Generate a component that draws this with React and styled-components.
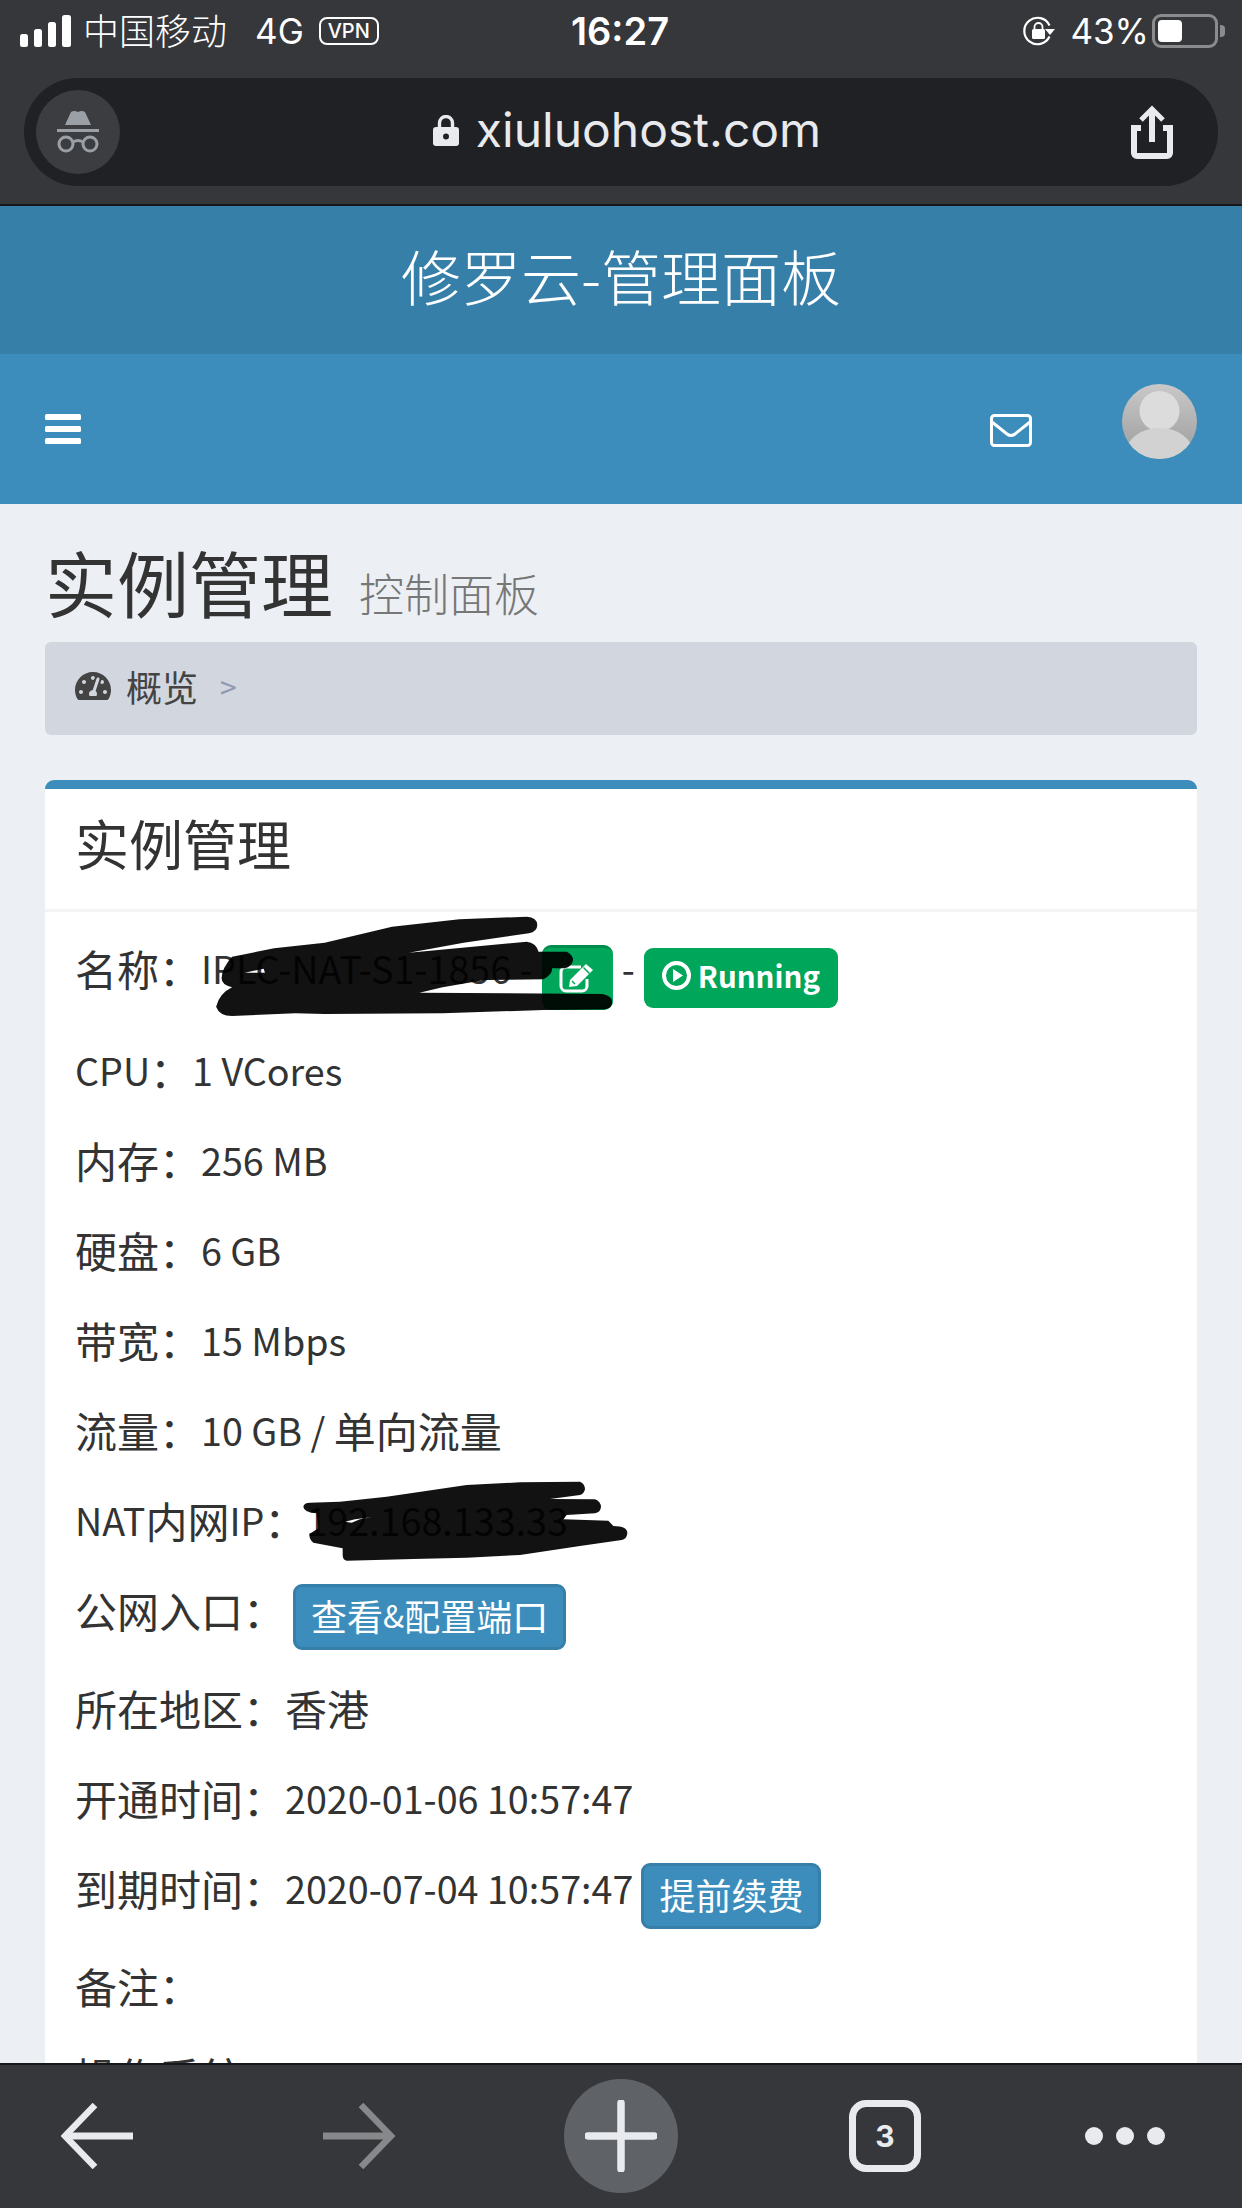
import React from "react";
import styled, { createGlobalStyle } from "styled-components";
import { FaTachometerAlt } from "react-icons/fa";

const CJK = '"Noto Sans CJK SC", "Noto Sans", sans-serif';

const Global = createGlobalStyle`
  html, body { margin: 0; padding: 0; background: #ecf0f5; }
  * { box-sizing: border-box; }
`;

const Page = styled.div`
  width: 1242px;
  height: 2208px;
  display: flex;
  flex-direction: column;
  overflow: hidden;
  font-family: ${CJK};
  color: #333;
`;

const Toolbar = styled.header`
  height: 206px;
  flex: none;
  background: #36373b;
  border-bottom: 2px solid #17181a;
  padding: 0 24px;
  color: #fff;
`;

const StatusBar = styled.div`
  height: 78px;
  margin: 0 -24px;
  padding: 0 24px 16px 20px;
  display: grid;
  grid-template-columns: 1fr auto 1fr;
  align-items: center;
`;

const StatusLeft = styled.div`
  display: flex;
  align-items: center;
`;

const StatusRight = styled.div`
  display: flex;
  align-items: center;
  justify-content: flex-end;
`;

const Carrier = styled.span`
  font-size: 36px;
  line-height: 40px;
  font-weight: 300;
  margin: 0 0 4px 12px;
`;

const StatusText = styled.span`
  font-family: Inter, sans-serif;
  font-size: 35px;
  line-height: 40px;
  font-weight: 400;
  margin-left: ${p => p.$gap || 0}px;
`;

const Clock = styled.span`
  font-family: Inter, sans-serif;
  font-size: 38px;
  line-height: 40px;
  font-weight: 600;
  margin-left: 2px;
`;

const VpnTag = styled.span`
  width: 60px;
  height: 28px;
  margin-left: 15px;
  border: 2px solid #fff;
  border-radius: 8px;
  font-family: Inter, sans-serif;
  font-size: 20px;
  font-weight: 500;
  display: flex;
  align-items: center;
  justify-content: center;
`;

const Battery = styled.span`
  width: 66px;
  height: 34px;
  margin-left: 3px;
  border: 3px solid #8a8b8d;
  border-radius: 9px;
  padding: 3px;
  display: block;
  position: relative;
  &::after {
    content: "";
    position: absolute;
    right: -10px;
    top: 8px;
    width: 5px;
    height: 12px;
    background: #8a8b8d;
    border-radius: 0 4px 4px 0;
  }
`;

const BatteryFill = styled.span`
  display: block;
  width: 24px;
  height: 22px;
  background: #fff;
  border-radius: 4px;
`;

const UrlBar = styled.div`
  height: 108px;
  border-radius: 54px;
  background: #202124;
  padding: 0 45px 0 12px;
  display: flex;
  align-items: center;
  justify-content: space-between;
`;

const Incognito = styled.span`
  width: 84px;
  height: 84px;
  border-radius: 50%;
  background: #3c3d41;
  display: block;
`;

const Address = styled.div`
  display: flex;
  align-items: center;
  gap: 17px;
  margin: 0 0 4px 3px;
`;

const UrlText = styled.span`
  font-family: Inter, sans-serif;
  font-size: 48px;
  line-height: 56px;
  font-weight: 400;
  color: #e8eaed;
`;

const Logo = styled.div`
  height: 148px;
  flex: none;
  padding-bottom: 12px;
  background: #367fa9;
  color: #fff;
  font-size: 60px;
  font-weight: 300;
  display: flex;
  align-items: center;
  justify-content: center;
`;

const Navbar = styled.nav`
  height: 150px;
  flex: none;
  background: #3c8dbc;
  padding: 30px 45px 0;
  display: flex;
  align-items: flex-start;
`;

const Hamburger = styled.svg`
  margin-top: 30px;
  display: block;
`;

const MailIcon = styled.svg`
  margin: 30px 90px 0 auto;
  display: block;
`;

const Avatar = styled.svg`
  display: block;
`;

const Content = styled.main`
  flex: 1;
  min-height: 0;
  overflow: hidden;
  padding: 38px 45px 0;
`;

const Heading = styled.div`
  display: flex;
  align-items: baseline;
  gap: 26px;
  height: 85px;
`;

const Title = styled.h1`
  margin: 0;
  font-size: 72px;
  line-height: 78px;
  font-weight: 400;
`;

const Subtitle = styled.small`
  font-size: 45px;
  font-weight: 300;
  color: #777;
`;

const Breadcrumb = styled.div`
  height: 93px;
  margin-top: 15px;
  background: #d2d6de;
  border-radius: 6px;
  padding: 0 30px 6px;
  display: flex;
  align-items: center;
  color: #444;
  font-size: 36px;
`;

const CrumbText = styled.span`
  margin-left: 15px;
  line-height: 60px;
`;

const CrumbSep = styled.span`
  margin-left: 22px;
  color: #8f99b0;
  font-size: 30px;
`;

const Box = styled.section`
  margin-top: 45px;
  background: #fff;
  border-top: 9px solid #3c8dbc;
  border-radius: 9px 9px 0 0;
`;

const BoxHeader = styled.div`
  height: 123px;
  padding: 0 30px 13px;
  border-bottom: 3px solid #f4f4f4;
  font-size: 54px;
  display: flex;
  align-items: center;
`;

const BoxBody = styled.div`
  padding: 28px 30px 0;
`;

const Row = styled.div`
  position: relative;
  display: flex;
  align-items: flex-start;
  height: ${p => p.$h || 60}px;
  margin-bottom: 30px;
  font-size: 42px;
  line-height: 56px;
  white-space: pre;
`;

const Latin = styled.span`
  font-size: 37.7px;
`;

const Button = styled.span`
  height: 66px;
  margin-top: ${p => p.$top}px;
  margin-left: ${p => p.$left}px;
  padding: 0 15px 4px;
  border: 3px solid #367fa9;
  border-radius: 9px;
  background: #3c8dbc;
  color: #fff;
  font-size: 36px;
  display: flex;
  align-items: center;
`;

const ButtonLatin = styled.span`
  font-size: 31px;
`;

const EditButton = styled.span`
  width: 71px;
  height: 65px;
  margin: 5px 9px 0 9px;
  background: #00a65a;
  border: 3px solid #008d4c;
  border-width: 3px 0;
  border-radius: 9px;
  display: flex;
  align-items: center;
  justify-content: center;
`;

const StatusLabel = styled.span`
  height: 60px;
  margin: 8px 0 0 9px;
  padding: 0 18px 6px 18px;
  background: #00a65a;
  border-radius: 9px;
  color: #fff;
  font-size: 29.5px;
  font-weight: 700;
  display: flex;
  align-items: center;
  gap: 7px;
`;

const Scribble = styled.svg`
  position: absolute;
  left: ${p => p.$x}px;
  top: ${p => p.$y}px;
  pointer-events: none;
`;

const BottomBar = styled.footer`
  height: 145px;
  flex: none;
  background: #36373b;
  border-top: 2px solid #17181a;
  padding: 14px 0 0 61px;
  display: grid;
  grid-template-columns: 262px 241px 285px 236px auto;
  align-items: center;
  justify-items: start;
  align-content: start;
`;

const NewTab = styled.span`
  width: 114px;
  height: 114px;
  border-radius: 50%;
  background: #5f6368;
  display: flex;
  align-items: center;
  justify-content: center;
`;

const TabCount = styled.span`
  width: 72px;
  height: 72px;
  border: 7px solid #e8eaed;
  border-radius: 17px;
  color: #e8eaed;
  font-family: Inter, sans-serif;
  font-size: 30px;
  font-weight: 700;
  display: flex;
  align-items: center;
  justify-content: center;
`;

const Signal = () => (
  <svg width="51" height="32" viewBox="0 0 51 32">
    <rect x="0" y="19" width="8" height="13" rx="2.5" fill="#fff" />
    <rect x="14" y="14" width="8" height="18" rx="2.5" fill="#fff" />
    <rect x="28" y="7" width="8" height="25" rx="2.5" fill="#fff" />
    <rect x="42" y="0" width="9" height="32" rx="2.5" fill="#fff" />
  </svg>
);

const RotationLock = () => (
  <svg width="34" height="30" viewBox="0 0 34 30">
    <path d="M27.5 9.5A13.2 13.2 0 1 0 27.5 20.5" fill="none" stroke="#fff" strokeWidth="2.2" />
    <path d="M23 13h10l-5 6z" fill="#fff" />
    <rect x="10" y="13" width="13" height="10" rx="1.5" fill="#fff" />
    <path d="M12.5 13.5v-2.5a4 4 0 0 1 8 0v2.5" fill="none" stroke="#fff" strokeWidth="1.8" />
  </svg>
);

const IncognitoIcon = () => (
  <Incognito>
    <svg width="84" height="84" viewBox="0 0 84 84">
      <path d="M29 35L35 22Q38 20 42 22Q46 20 49 22L55 35z" fill="#9aa0a6" />
      <rect x="21" y="39" width="42" height="3" fill="#9aa0a6" />
      <circle cx="30" cy="54" r="7" fill="none" stroke="#9aa0a6" strokeWidth="3" />
      <circle cx="54" cy="54" r="7" fill="none" stroke="#9aa0a6" strokeWidth="3" />
      <path d="M37 52Q42 49 47 52" fill="none" stroke="#9aa0a6" strokeWidth="3" />
    </svg>
  </Incognito>
);

const LockIcon = () => (
  <svg width="26" height="31" viewBox="0 0 26 31">
    <path d="M6.5 13V8a6.5 6.5 0 0 1 13 0v5" fill="none" stroke="#e8eaed" strokeWidth="3.4" />
    <rect x="0" y="12" width="26" height="19" rx="3" fill="#e8eaed" />
    <circle cx="13" cy="21.5" r="3" fill="#202124" />
  </svg>
);

const ShareIcon = () => (
  <svg width="42" height="54" viewBox="0 0 42 54">
    <path d="M21 4V37" stroke="#e8eaed" strokeWidth="6" fill="none" />
    <path d="M10 15L21 4L32 15" stroke="#e8eaed" strokeWidth="5" fill="none" />
    <path d="M10 23H3V48a3 3 0 0 0 3 3H36a3 3 0 0 0 3-3V23H32" stroke="#e8eaed" strokeWidth="6" fill="none" />
  </svg>
);

const EditIcon = () => (
  <svg width="36" height="30" viewBox="0 0 36 30">
    <path d="M22 4H7a5 5 0 0 0-5 5V23a5 5 0 0 0 5 5H23a5 5 0 0 0 5-5V16" fill="none" stroke="#fff" strokeWidth="3" />
    <path d="M27 1L34 7L18 23L10 24L11 17Z" fill="#fff" />
    <path d="M24.5 4.5L30.5 10.5" stroke="#00a65a" strokeWidth="1.5" />
    <path d="M13 18L16 21" stroke="#00a65a" strokeWidth="1.5" />
  </svg>
);

const PlayIcon = () => (
  <svg width="29" height="29" viewBox="0 0 29 29">
    <circle cx="14.5" cy="14.5" r="12.5" fill="none" stroke="#fff" strokeWidth="4" />
    <path d="M11 8L21 14.5L11 21Z" fill="#fff" />
  </svg>
);

const Arrow = ({ color, flip }) => (
  <svg width="72" height="66" viewBox="0 0 72 66" style={flip ? { transform: "scaleX(-1)" } : undefined}>
    <path d="M72 33H4" stroke={color} strokeWidth="7" fill="none" />
    <path d="M34 2L4 33L34 64" stroke={color} strokeWidth="6.5" fill="none" />
  </svg>
);

const Plus = () => (
  <svg width="72" height="72" viewBox="0 0 72 72">
    <path d="M36 3V69M3 36H69" stroke="#e8eaed" strokeWidth="7.5" strokeLinecap="round" fill="none" />
  </svg>
);

const Dots = () => (
  <svg width="80" height="18" viewBox="0 0 80 18">
    <circle cx="9" cy="9" r="9" fill="#e8eaed" />
    <circle cx="40" cy="9" r="9" fill="#e8eaed" />
    <circle cx="71" cy="9" r="9" fill="#e8eaed" />
  </svg>
);

const name = "M100 170L200 145L320 128L480 80L640 58L800 50Q825 52 825 75Q825 95 805 100L650 128L520 158L800 125Q822 128 828 155L895 155Q910 165 910 180Q908 200 890 205L860 205Q862 222 840 238L700 240L600 262L545 278L980 282Q1003 288 1003 305Q1003 325 985 328L840 330L600 340L320 342L250 340L100 348Q70 348 62 320Q70 280 100 262Q75 255 75 235Q75 205 100 170ZM130 218L175 206L178 218Z";
const ip = "M70 140Q72 128 90 128L180 125L320 110L560 75L720 67L900 65Q915 72 915 88Q912 102 900 105L810 117L945 118Q963 125 963 142Q960 158 945 160L860 165L850 178L985 182L1000 198Q1042 198 1042 220Q1040 238 1025 240L900 258L720 285L560 293L400 297L200 302Q188 300 188 285L188 265L100 248Q88 240 88 222L115 205L110 160Q72 158 70 140ZM195 185L225 178L275 172L240 178L215 188Z";

export default function App() {
  return (
    <Page lang="zh-CN">
      <Global />
      <Toolbar>
        <StatusBar>
          <StatusLeft>
            <Signal />
            <Carrier>中国移动</Carrier>
            <StatusText $gap={28}>4G</StatusText>
            <VpnTag>VPN</VpnTag>
          </StatusLeft>
          <Clock>16:27</Clock>
          <StatusRight>
            <RotationLock />
            <StatusText $gap={14}>43%</StatusText>
            <Battery><BatteryFill /></Battery>
          </StatusRight>
        </StatusBar>
        <UrlBar>
          <IncognitoIcon />
          <Address>
            <LockIcon />
            <UrlText>xiuluohost.com</UrlText>
          </Address>
          <ShareIcon />
        </UrlBar>
      </Toolbar>

      <Logo>修罗云-管理面板</Logo>

      <Navbar>
        <Hamburger width="36" height="30" viewBox="0 0 36 30">
          <rect y="0" width="36" height="6" rx="1.5" fill="#fff" />
          <rect y="12" width="36" height="6" rx="1.5" fill="#fff" />
          <rect y="24" width="36" height="6" rx="1.5" fill="#fff" />
        </Hamburger>
        <MailIcon width="42" height="33" viewBox="0 0 42 33">
          <rect x="1.5" y="1.5" width="39" height="30" rx="3" fill="none" stroke="#fff" strokeWidth="3" />
          <path d="M2 8L17 20Q21 23 25 20L40 8" fill="none" stroke="#fff" strokeWidth="3" />
        </MailIcon>
        <Avatar width="75" height="75" viewBox="0 0 75 75">
          <defs>
            <linearGradient id="avatarBg" x1="0" y1="0" x2="0" y2="1">
              <stop offset="0" stopColor="#c9c9c9" />
              <stop offset="0.7" stopColor="#a9a9a9" />
            </linearGradient>
            <clipPath id="avatarClip"><circle cx="37.5" cy="37.5" r="37.5" /></clipPath>
          </defs>
          <circle cx="37.5" cy="37.5" r="37.5" fill="url(#avatarBg)" />
          <g clipPath="url(#avatarClip)">
            <circle cx="37.5" cy="27" r="20" fill="#dcdcdc" />
            <ellipse cx="37.5" cy="68" rx="33" ry="24" fill="#d2d2d2" />
          </g>
        </Avatar>
      </Navbar>

      <Content>
        <Heading>
          <Title>实例管理</Title>
          <Subtitle>控制面板</Subtitle>
        </Heading>
        <Breadcrumb>
          <FaTachometerAlt size={36} color="#444" />
          <CrumbText>概览</CrumbText>
          <CrumbSep>&gt;</CrumbSep>
        </Breadcrumb>
        <Box>
          <BoxHeader>实例管理</BoxHeader>
          <BoxBody>
            <Row $h={72}>
              名称：<Latin>IPLC-NAT-S1-1856 -</Latin>
              <EditButton><EditIcon /></EditButton>
              <Latin>-</Latin>
              <StatusLabel><PlayIcon />Running</StatusLabel>
              <Scribble $x={115} $y={-40} width="660" height="140" viewBox="0 0 1568 420" preserveAspectRatio="none">
                <path d={name} fill="#000" fillOpacity="0.93" fillRule="evenodd" />
              </Scribble>
            </Row>
            <Row><Latin>CPU</Latin>：<Latin>1 VCores</Latin></Row>
            <Row>内存：<Latin>256 MB</Latin></Row>
            <Row>硬盘：<Latin>6 GB</Latin></Row>
            <Row>带宽：<Latin>15 Mbps</Latin></Row>
            <Row>流量：<Latin>10 GB / </Latin>单向流量</Row>
            <Row>
              <Latin>NAT</Latin>内网<Latin>IP</Latin>：<Latin>192.168.133.33</Latin>
              <Scribble $x={205} $y={-32} width="370" height="120" viewBox="0 0 1110 360">
                <path d={ip} fill="#000" fillOpacity="0.93" fillRule="evenodd" />
              </Scribble>
            </Row>
            <Row $h={68}>公网入口：<Button $top={2} $left={8}>查看<ButtonLatin>&amp;</ButtonLatin>配置端口</Button></Row>
            <Row>所在地区：香港</Row>
            <Row>开通时间：<Latin>2020-01-06 10:57:47</Latin></Row>
            <Row $h={68}>到期时间：<Latin>2020-07-04 10:57:47</Latin><Button $top={3} $left={8}>提前续费</Button></Row>
            <Row>备注：</Row>
            <Row>操作系统：</Row>
          </BoxBody>
        </Box>
      </Content>

      <BottomBar>
        <Arrow color="#e8eaed" />
        <Arrow color="#87888a" flip />
        <NewTab><Plus /></NewTab>
        <TabCount>3</TabCount>
        <Dots />
      </BottomBar>
    </Page>
  );
}
